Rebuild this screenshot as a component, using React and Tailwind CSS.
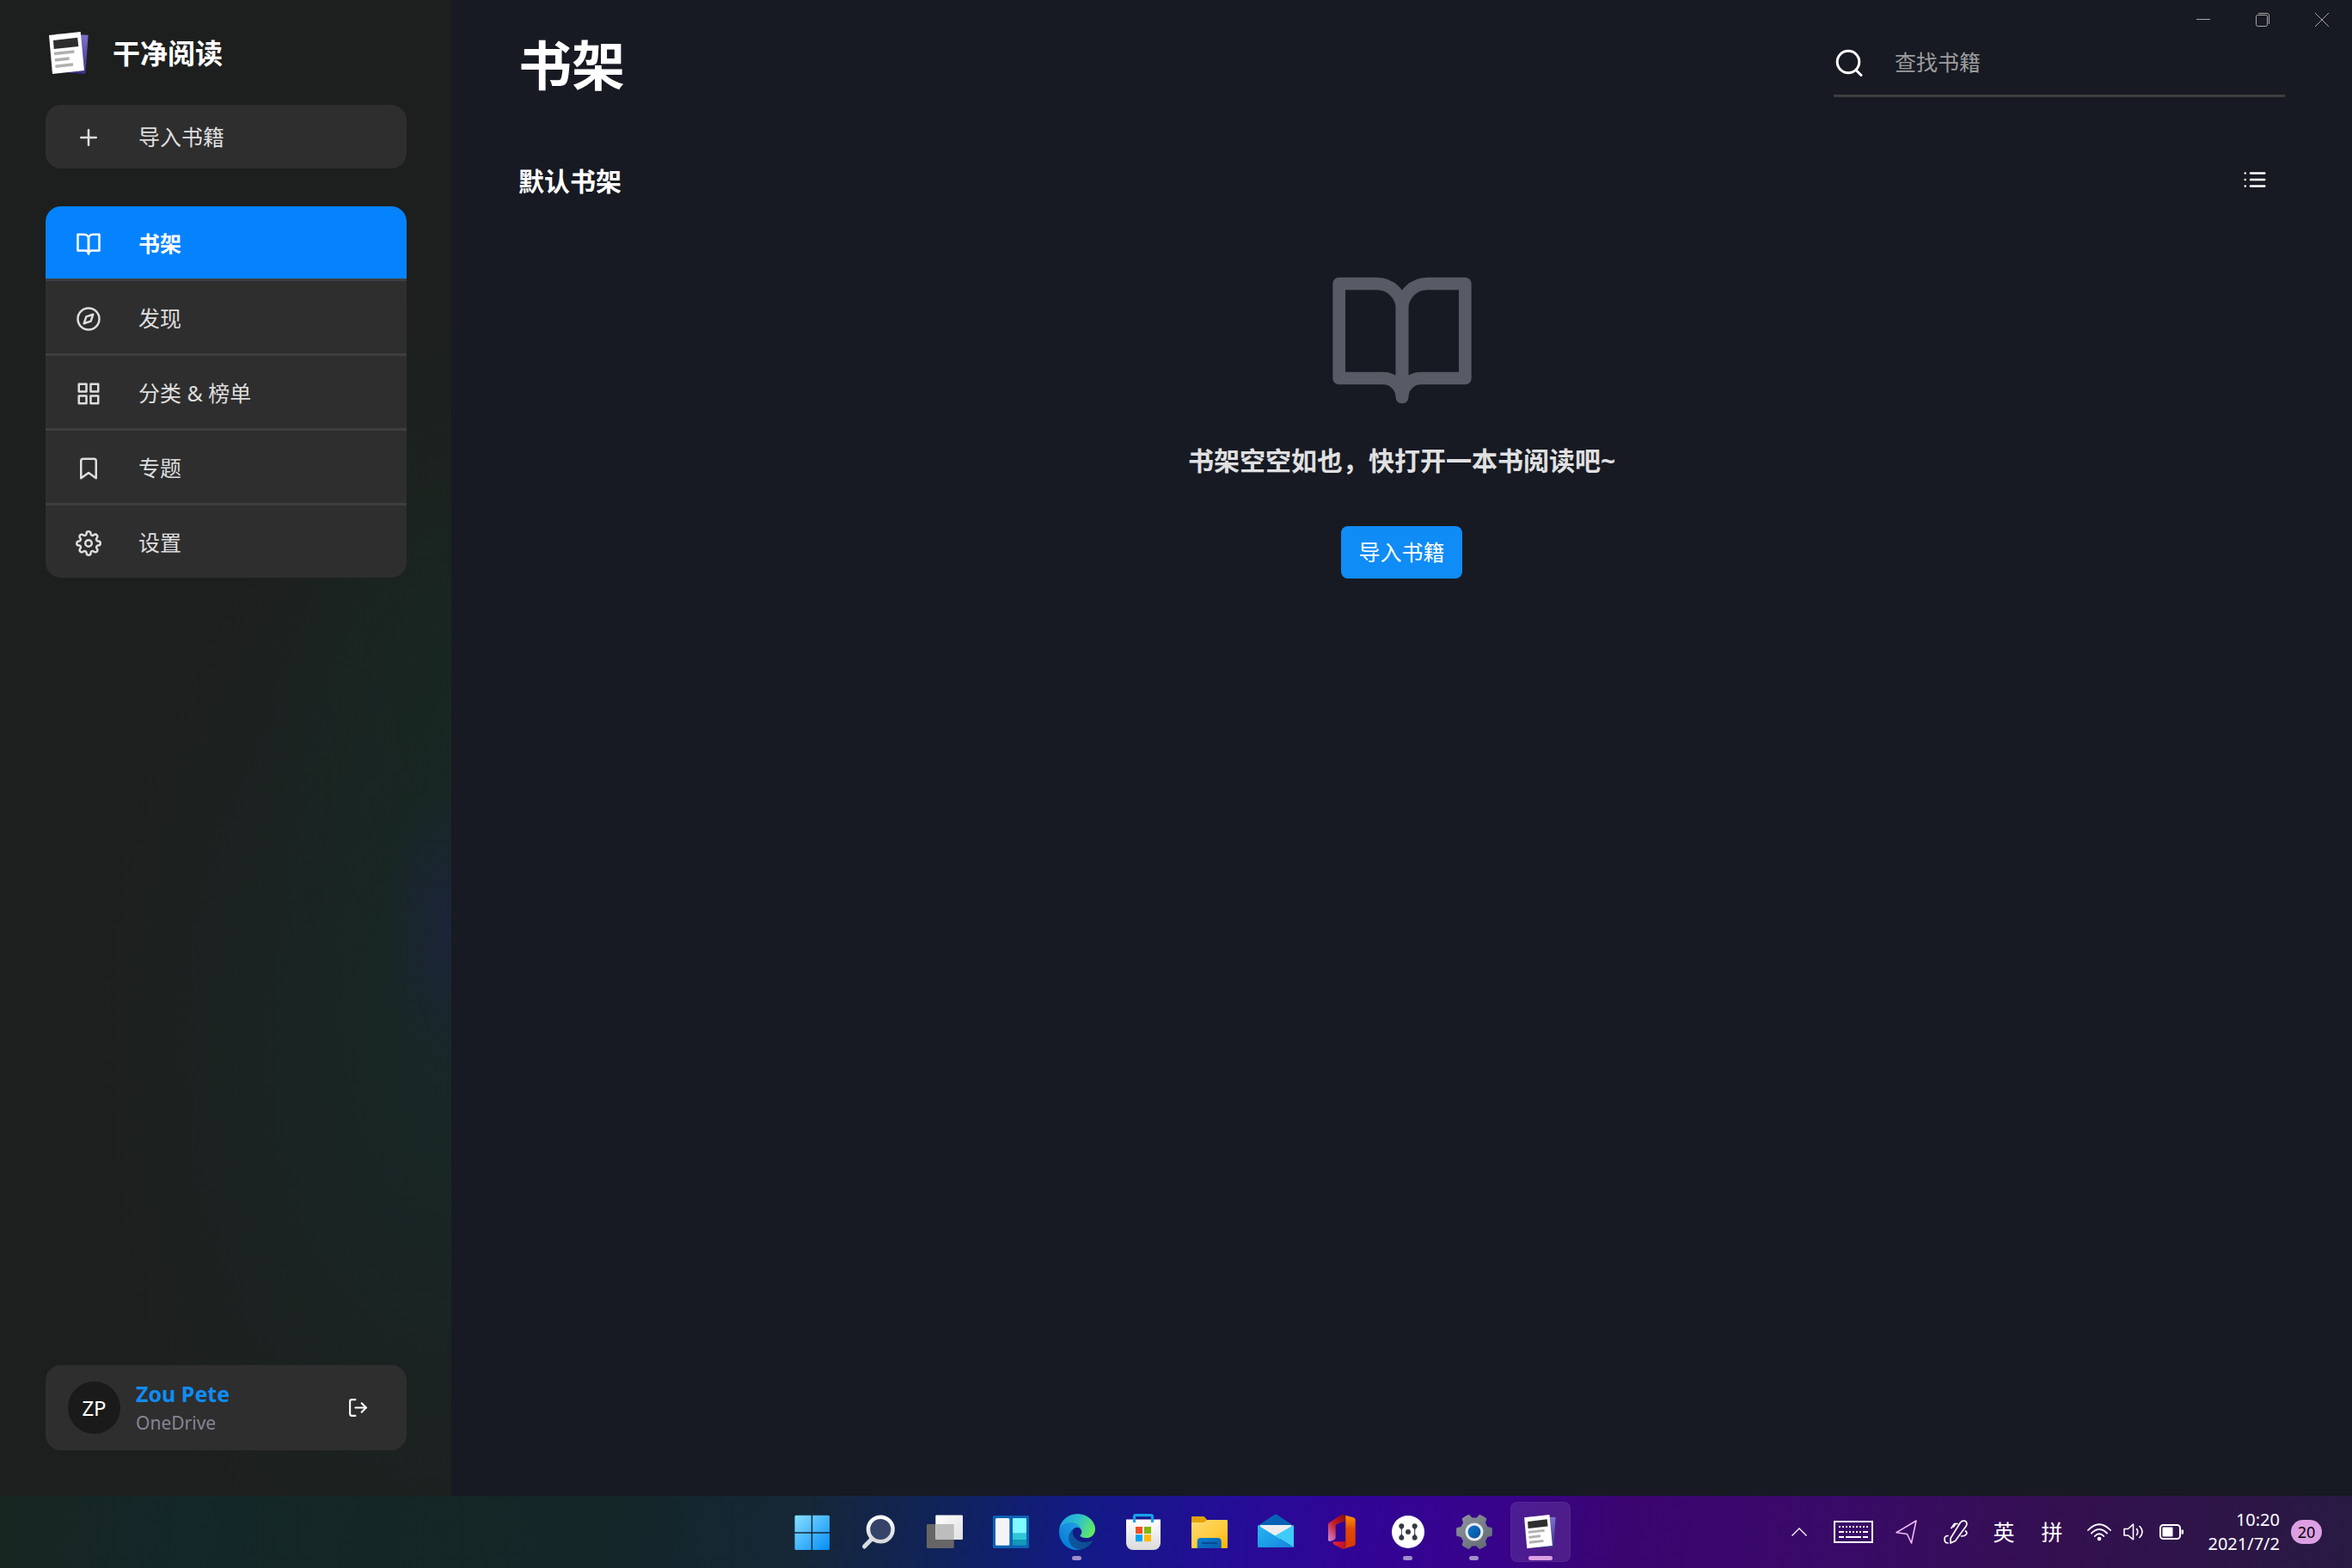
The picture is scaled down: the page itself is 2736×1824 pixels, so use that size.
import React from "react";
import {
  FiBookOpen,
  FiBookmark,
  FiCompass,
  FiGrid,
  FiList,
  FiLogOut,
  FiPlus,
  FiSettings,
} from "react-icons/fi";

const navItems = [
  { label: "书架", Icon: FiBookOpen, active: true },
  { label: "发现", Icon: FiCompass },
  { label: "分类 & 榜单", Icon: FiGrid },
  { label: "专题", Icon: FiBookmark },
  { label: "设置", Icon: FiSettings },
];

function ReaderLogo({ id, className }) {
  return (
    <svg viewBox="0 0 46 50" className={className} aria-hidden="true">
      <defs>
        <linearGradient id={id} x1="0" y1="0" x2="0" y2="1">
          <stop offset="0" stopColor="#7b74cf" />
          <stop offset="1" stopColor="#3c2f85" />
        </linearGradient>
      </defs>
      <path d="M8.500 2.500 45.600 3.700 42.500 49 22 47.500Z" fill={`url(#${id})`} />
      <path d="M0 4 36.700 0 41 45 4 49Z" fill="#fff" />
      <path d="M5 10 33.200 6.700 34.300 17 5.700 20Z" fill="#2e2e2e" />
      <path d="M6 25.500 29.400 23M6.800 33 23.600 31M7.400 40.300 28 38" stroke="#b0b0b0" strokeWidth="3.600" />
    </svg>
  );
}

function Sidebar() {
  return (
    <aside className="flex w-[525px] shrink-0 flex-col bg-[#1d1f1e] bg-[radial-gradient(ellipse_80px_170px_at_100%_62%,#1b2439_0%,transparent_100%),radial-gradient(ellipse_420px_680px_at_100%_70%,#172826_0%,transparent_100%),radial-gradient(ellipse_220px_500px_at_100%_48%,#18261f_0%,transparent_100%)] pr-[52px] pb-[53px] pl-[53px]">
      <div className="flex h-[122px] items-center gap-7 pt-[2px] pl-1">
        <ReaderLogo id="logo-side" className="h-[50px] w-[46px]" />
        <span className="text-[32px] font-bold text-white">干净阅读</span>
      </div>
      <button className="flex h-[74px] shrink-0 items-center gap-[43px] rounded-[18px] bg-[#2e2e2e] px-[35px] pt-[2px] text-[25px] text-[#dedede]">
        <FiPlus size={30} />
        导入书籍
      </button>
      <nav className="mt-11 flex flex-col divide-y-3 divide-[#3e3e3e] overflow-hidden rounded-[18px]">
        {navItems.map(({ label, Icon, active }) => (
          <a
            key={label}
            href="#"
            className={
              active
                ? "box-content flex h-[81px] items-center gap-[43px] bg-[#0583ff] px-[35px] pt-[3px] text-[25px] font-bold text-white"
                : "box-content flex h-[81px] items-center gap-[43px] bg-[#2e2e2e] px-[35px] pt-[3px] text-[25px] text-[#dedede]"
            }
          >
            <Icon size={30} />
            {label}
          </a>
        ))}
      </nav>
      <div className="mt-auto flex h-[99px] items-center rounded-[18px] bg-[#2e2e2e] pr-[44px] pl-[26px]">
        <div className="flex size-[61px] items-center justify-center rounded-full bg-[#1a1a1a] text-[24px] text-white">
          ZP
        </div>
        <div className="ml-[18px] flex-1 leading-[34px]">
          <p className="text-[25px] font-bold text-[#0f8cf5]">Zou Pete</p>
          <p className="text-[21px] text-[#858593]">OneDrive</p>
        </div>
        <button aria-label="退出登录" className="text-white">
          <FiLogOut size={25} />
        </button>
      </div>
    </aside>
  );
}

function WindowControls() {
  return (
    <div className="flex h-[46px] justify-end pr-px text-[#a8a8a8]">
      <button aria-label="最小化" className="flex w-[69px] items-center justify-center">
        <svg width="16" height="16" viewBox="0 0 16 16" stroke="currentColor" fill="none">
          <path d="M0 7.500H16" />
        </svg>
      </button>
      <button aria-label="还原" className="flex w-[69px] items-center justify-center">
        <svg width="16" height="16" viewBox="0 0 16 16" stroke="currentColor" fill="none">
          <rect x=".5" y="2.500" width="13" height="13" rx="2" />
          <path d="M3 .5H13a2.500 2.500 0 0 1 2.500 2.500V13" />
        </svg>
      </button>
      <button aria-label="关闭" className="flex w-[69px] items-center justify-center">
        <svg width="16" height="16" viewBox="0 0 16 16" stroke="currentColor" fill="none">
          <path d="M0 0 16 16M16 0 0 16" />
        </svg>
      </button>
    </div>
  );
}

function Main() {
  return (
    <main className="flex min-w-0 flex-1 flex-col bg-[#171a22]">
      <WindowControls />
      <header className="flex h-[67px] items-start justify-between px-[78px]">
        <h1 className="text-[62px] leading-[60px] font-bold text-white">书架</h1>
        <label className="flex h-[67px] w-[525px] items-center gap-[37px] border-b-3 border-[#3f3e3e] pb-[10px] pl-[2px]">
          <svg width="32" height="32" viewBox="0 0 32 32" fill="none" stroke="#fff" strokeWidth="3" strokeLinecap="round" aria-hidden="true">
            <circle cx="15" cy="15" r="12.800" />
            <path d="M24.500 25 30 30.500" />
          </svg>
          <input
            type="search"
            aria-label="查找书籍"
            placeholder="查找书籍"
            className="min-w-0 flex-1 bg-transparent text-[25px] text-white outline-none placeholder:text-[#9c9c9c]"
          />
        </label>
      </header>
      <section className="flex flex-1 flex-col px-[78px] pt-16">
        <div className="flex h-16 items-center justify-between">
          <h2 className="pt-[3px] text-[30px] font-bold text-white">默认书架</h2>
          <button aria-label="列表视图" className="p-5 text-white">
            <FiList size={30} />
          </button>
        </div>
        <div className="flex flex-col items-center pt-[67px]">
          <FiBookOpen size={176} className="text-[#585a66]" />
          <p className="mt-8 text-[30px] leading-10 font-bold text-[#e0e0e2]">书架空空如也，快打开一本书阅读吧~</p>
          <button className="mt-14 h-[61px] rounded-lg bg-[#0f8cf5] px-5 text-[25px] text-white">导入书籍</button>
        </div>
      </section>
    </main>
  );
}

function StartIcon() {
  return (
    <svg viewBox="0 0 42 42" className="size-[42px]">
      <defs>
        <linearGradient id="start" gradientUnits="userSpaceOnUse" x1="0" y1="0" x2="42" y2="42">
          <stop offset="0" stopColor="#8ae0ff" />
          <stop offset="1" stopColor="#008cf8" />
        </linearGradient>
      </defs>
      <path
        fill="url(#start)"
        d="M2 .7H19.700V20.200H.5V2.200A1.500 1.500 0 0 1 2 .7ZM21.200 .7H39.500A1.500 1.500 0 0 1 41 2.200V20.200H21.200ZM.5 21.700H19.700V41H2A1.500 1.500 0 0 1 .5 39.500ZM21.200 21.700H41V39.500A1.500 1.500 0 0 1 39.500 41H21.200Z"
      />
    </svg>
  );
}

function SearchTaskIcon() {
  return (
    <svg viewBox="0 0 42 42" className="size-[42px]" fill="none">
      <defs>
        <linearGradient id="glass" x1="0" y1="0" x2="0" y2="1">
          <stop offset="0" stopColor="#fff" />
          <stop offset="1" stopColor="#d5d9dc" />
        </linearGradient>
      </defs>
      <path d="M13.300 28 4.500 37" stroke="#d9dcdf" strokeWidth="5" strokeLinecap="round" />
      <circle cx="23.300" cy="17" r="14.300" fill="#36446a" stroke="url(#glass)" strokeWidth="4.500" />
    </svg>
  );
}

function TaskViewIcon() {
  return (
    <svg viewBox="0 0 42 42" className="size-[42px]">
      <defs>
        <linearGradient id="tv" x1="0" y1="0" x2="1" y2="1">
          <stop offset="0" stopColor="#fff" />
          <stop offset="1" stopColor="#e0e0e0" />
        </linearGradient>
      </defs>
      <rect x="0" y="11" width="31.700" height="28" rx="1.200" fill="#666" />
      <rect x="10.300" y=".5" width="31.700" height="28.500" rx="1.200" fill="url(#tv)" />
      <path d="M10.300 11H31.700V29H11.500a1.200 1.200 0 0 1-1.200-1.200Z" fill="#bdbdbd" />
    </svg>
  );
}

function WidgetsIcon() {
  return (
    <svg viewBox="0 0 42 42" className="size-[42px]">
      <rect y="1" width="42" height="38" rx="1.500" fill="#0b63b4" />
      <rect x="3" y="4" width="16.300" height="31.700" rx="1.500" fill="#f5f5f7" />
      <rect x="23" y="4" width="16" height="31.700" rx="1" fill="#1298b8" />
      <path d="M23 5a1 1 0 0 1 1-1H38a1 1 0 0 1 1 1V29H23Z" fill="#2fc7d6" />
      <path d="M23 5a1 1 0 0 1 1-1H38a1 1 0 0 1 1 1V21.300H23Z" fill="#7ffaff" />
    </svg>
  );
}

function EdgeIcon() {
  return (
    <svg viewBox="0 6 256 256" className="size-[42px] overflow-visible">
      <defs>
        <linearGradient id="edgeA" x1="0" y1="0" x2="1" y2="0">
          <stop offset="0" stopColor="#0c59a4" />
          <stop offset="1" stopColor="#114a8b" />
        </linearGradient>
        <linearGradient id="edgeB" x1=".8" y1=".2" x2=".2" y2="1">
          <stop offset="0" stopColor="#1b9de2" />
          <stop offset=".5" stopColor="#1389dc" />
          <stop offset="1" stopColor="#0078d4" />
        </linearGradient>
        <linearGradient id="edgeC" x1="0" y1=".3" x2="1" y2=".6">
          <stop offset="0" stopColor="#1ba6e6" />
          <stop offset=".5" stopColor="#2fc2c9" />
          <stop offset="1" stopColor="#66eb5e" />
        </linearGradient>
      </defs>
      <path fill="url(#edgeA)" d="M231,190.500c-3.400,1.800-6.900,3.400-10.500,4.700c-11.500,4.300-23.600,6.500-35.900,6.500c-47.300,0-88.500-32.500-88.500-74.300c0.100-11.400,6.400-21.900,16.400-27.300c-42.800,1.800-53.800,46.400-53.800,72.500c0,73.900,68.100,81.400,82.800,81.400c7.900,0,19.800-2.300,27-4.600l1.300-0.400c27.600-9.500,51-28.100,66.600-52.800c1.200-1.900,0.600-4.300-1.200-5.500C233.900,189.900,232.300,189.800,231,190.500z" />
      <path fill="url(#edgeB)" d="M105.700,241.400c-8.900-5.500-16.600-12.800-22.700-21.300c-26.300-36-18.400-86.500,17.600-112.800c3.800-2.700,7.700-5.200,11.900-7.200c3.100-1.500,8.400-4.100,15.500-4c10.100,0.100,19.600,4.900,25.700,13c4,5.400,6.300,11.900,6.400,18.700c0-0.200,24.500-79.600-80-79.600c-43.900,0-80,41.700-80,78.200c-0.200,19.300,4,38.500,12.100,56c27.600,58.800,94.800,87.600,156.400,67.100C147.500,256.100,124.500,253.200,105.700,241.400L105.700,241.400z" />
      <path fill="url(#edgeC)" d="M152.300,148.900c-0.800,1-3.300,2.500-3.300,5.700c0,2.600,1.700,5.100,4.700,7.200c14.400,10,41.500,8.700,41.600,8.700c10.700,0,21.100-2.900,30.300-8.300c18.800-11,30.400-31.100,30.400-52.900c0.300-22.400-8-37.300-11.300-43.900C223.500,23.900,177.700,0,128,0C58,0,1,56.200,0,126.200c0.500-36.500,36.800-66,80-66c3.500,0,23.500,0.300,42,10.100c16.300,8.600,24.900,18.900,30.800,29.200c6.200,10.700,7.300,24.100,7.300,29.500S157.300,142.300,152.300,148.900z" />
    </svg>
  );
}

function StoreIcon() {
  return (
    <svg viewBox="0 0 42 42" className="size-[42px] overflow-visible">
      <defs>
        <linearGradient id="bag" x1="0" y1="0" x2="0" y2="1">
          <stop offset="0" stopColor="#fff" />
          <stop offset="1" stopColor="#dadada" />
        </linearGradient>
      </defs>
      <path d="M1 5.500H41V33a8 8 0 0 1-8 8H9a8 8 0 0 1-8-8Z" fill="url(#bag)" />
      <path d="M10.500 9V2A1.500 1.500 0 0 1 12 .6H30A1.500 1.500 0 0 1 31.500 2V9" fill="none" stroke="#16a3e8" strokeWidth="3.200" />
      <path d="M12 14h8v8h-8Z" fill="#f25022" />
      <path d="M22 14h8v8h-8Z" fill="#7fba00" />
      <path d="M12 23.200h8v8h-8Z" fill="#00a4ef" />
      <path d="M22 23.200h8v8h-8Z" fill="#ffb900" />
    </svg>
  );
}

function ExplorerIcon() {
  return (
    <svg viewBox="0 0 42 42" className="size-[42px]">
      <defs>
        <linearGradient id="folder" x1="0" y1="0" x2="1" y2="1">
          <stop offset="0" stopColor="#ffda72" />
          <stop offset=".6" stopColor="#ffcb3a" />
          <stop offset="1" stopColor="#f9b300" />
        </linearGradient>
        <linearGradient id="folderBlue" x1="0" y1="0" x2="1" y2="1">
          <stop offset="0" stopColor="#0a7ed0" />
          <stop offset="1" stopColor="#0a5cab" />
        </linearGradient>
      </defs>
      <path d="M1 2H13.500a3 3 0 0 1 2.200 1L18 6V12H0V3A1 1 0 0 1 1 2Z" fill="#e2a203" />
      <path d="M0 9H13.500a3 3 0 0 0 2-.8L17.500 6.500A2 2 0 0 1 19 6H41a1 1 0 0 1 1 1V38a1 1 0 0 1-1 1H1a1 1 0 0 1-1-1Z" fill="url(#folder)" />
      <path d="M6.700 39V31a4 4 0 0 1 4-4H30.700a4 4 0 0 1 4 4V39Z" fill="url(#folderBlue)" />
      <path d="M13 33H29" stroke="#074a8f" strokeWidth="2" strokeLinecap="round" />
    </svg>
  );
}

function MailIcon() {
  return (
    <svg viewBox="0 0 42 42" className="size-[42px] overflow-visible">
      <defs>
        <linearGradient id="mailBody" x1="0" y1="0" x2="1" y2="1">
          <stop offset="0" stopColor="#25b8f2" />
          <stop offset="1" stopColor="#1583de" />
        </linearGradient>
      </defs>
      <path d="M0 13 19 .2a3.500 3.500 0 0 1 4 0L42 13V20H0Z" fill="#0762b5" />
      <path d="M2.500 12H39.500V28H2.500Z" fill="#ededf0" />
      <path d="M42 12V38L20 24.500Z" fill="#3dcbf7" />
      <path d="M0 12 42 38H1a1 1 0 0 1-1-1Z" fill="url(#mailBody)" />
    </svg>
  );
}

function OfficeIcon() {
  return (
    <svg viewBox="0 0 42 42" className="size-[42px] overflow-visible">
      <defs>
        <linearGradient id="offA" x1=".8" y1="0" x2="0" y2="1">
          <stop offset="0" stopColor="#8c0f12" />
          <stop offset=".45" stopColor="#c7202c" />
          <stop offset="1" stopColor="#d18ae0" />
        </linearGradient>
        <linearGradient id="offB" x1="0" y1="0" x2="0" y2="1">
          <stop offset="0" stopColor="#ff9500" />
          <stop offset=".4" stopColor="#e34a02" />
          <stop offset="1" stopColor="#d83a00" />
        </linearGradient>
        <linearGradient id="offC" x1="0" y1="0" x2="1" y2="0">
          <stop offset="0" stopColor="#f0203a" />
          <stop offset="1" stopColor="#b01226" />
        </linearGradient>
      </defs>
      <path d="M5 11.500a3 3 0 0 1 1.600-2.600L19.500 .6Q21.500-.5 25.300 .7V7L15 11a2 2 0 0 0-1.300 2V26.500a3 3 0 0 1-1.500 2.500L7.500 31Q5 31.500 5 29Z" fill="url(#offA)" />
      <path d="M11.500 31.300H26L24 39.500Q22 40.200 20 39L11.500 34.500Q9.500 32 11.500 31.300Z" fill="url(#offC)" />
      <path d="M25.300 .7 35 3.600a2.500 2.500 0 0 1 1.700 2.400V34a2.500 2.500 0 0 1-1.700 2.200L22.500 39.700Q25.300 38.500 25.300 35Z" fill="url(#offB)" />
    </svg>
  );
}

function NodesIcon() {
  return (
    <svg viewBox="0 0 42 42" className="size-[42px]">
      <circle cx="21" cy="20" r="19" fill="#fff" />
      <g fill="#343a42">
        <circle cx="13.300" cy="13.300" r="3" />
        <circle cx="13.300" cy="26.700" r="3" />
        <circle cx="28.700" cy="13.300" r="3" />
        <circle cx="28.700" cy="26.700" r="3" />
        <circle cx="21" cy="20" r="3" />
        <path d="M11.500 14 13 18V22L11.500 26H15.100L13.800 22V18L15.100 14ZM26.900 14 28.200 18V22L26.900 26H30.500L29.200 22V18L30.500 14Z" />
      </g>
    </svg>
  );
}

function GearIcon() {
  return (
    <svg viewBox="-21 -20 42 42" className="size-[42px] overflow-visible">
      <defs>
        <linearGradient id="gearFill" gradientUnits="userSpaceOnUse" x1="-15" y1="-18" x2="15" y2="18">
          <stop offset="0" stopColor="#8b929b" />
          <stop offset="1" stopColor="#626b74" />
        </linearGradient>
        <linearGradient id="gearBlue" x1="0" y1="0" x2="1" y2="1">
          <stop offset="0" stopColor="#0b78cf" />
          <stop offset="1" stopColor="#0b4f9c" />
        </linearGradient>
      </defs>
      <path
        fill="url(#gearFill)"
        d="M20.600-4.700Q21.200 0 20.600 4.700L15.500 6 13 10.500 14.400 15.500Q10.600 18.700 6.200 20.200L2.500 16.600H-2.500L-6.200 20.200Q-10.600 18.700-14.400 15.500L-13 10.500-15.500 6-20.600 4.700Q-21.200 0-20.600-4.700L-15.500-6-13-10.500-14.400-15.500Q-10.600-18.700-6.200-20.200L-2.500-16.600H2.500L6.200-20.200Q10.600-18.700 14.400-15.500L13-10.500 15.500-6Z"
      />
      <circle r="10.500" fill="#e9eaec" />
      <circle r="7.400" fill="url(#gearBlue)" />
    </svg>
  );
}

const apps = [
  { name: "开始", Icon: StartIcon },
  { name: "搜索", Icon: SearchTaskIcon },
  { name: "任务视图", Icon: TaskViewIcon },
  { name: "小组件", Icon: WidgetsIcon },
  { name: "Edge", Icon: EdgeIcon, running: true },
  { name: "商店", Icon: StoreIcon },
  { name: "文件资源管理器", Icon: ExplorerIcon },
  { name: "邮件", Icon: MailIcon },
  { name: "Office", Icon: OfficeIcon },
  { name: "节点", Icon: NodesIcon, running: true },
  { name: "系统设置", Icon: GearIcon, running: true },
];

function Tray() {
  return (
    <div className="flex items-center justify-end pr-[35px] text-white">
      <button aria-label="显示隐藏的图标">
        <svg width="18" height="10" viewBox="0 0 18 10" fill="none" stroke="currentColor" strokeWidth="1.300">
          <path d="M.5 9.500 9 1 17.500 9.500" />
        </svg>
      </button>
      <button aria-label="触摸键盘" className="ml-[31px]">
        <svg width="46" height="26" viewBox="0 0 46 26" fill="none" stroke="currentColor" strokeWidth="2">
          <rect x="1" y="1" width="44" height="24" />
          <path d="M6 7H40" strokeDasharray="2 2" />
          <path d="M6 13H12M34 13H40M6 19H12M14 19H32M34 19H40" />
          <path d="M14 13H32" strokeDasharray="2 2" />
        </svg>
      </button>
      <button aria-label="位置" className="ml-[26px] text-[#f0b9f2]">
        <svg width="25" height="28" viewBox="0 0 25 28" fill="none" stroke="currentColor" strokeWidth="1.600" strokeLinejoin="round">
          <path d="M24 1 18.500 27 13.500 16.500 1 14.800Z" />
        </svg>
      </button>
      <button aria-label="手写笔" className="ml-[31px]">
        <svg width="28" height="28" viewBox="0 0 28 28" fill="none" stroke="currentColor" strokeWidth="1.700" strokeLinecap="round" strokeLinejoin="round">
          <path d="M8 27V21.500L19.500 3Q21.500 .3 25 1.300 28 3.500 26.300 7L13.500 24.500Z" />
          <path d="M9 9.500 12.500 4.500H16M14 4.500 11.500 8M25.500 13Q29 16 24 18.500L20.500 19M5 18.500Q1 18.500 1 22.500 1 27 5 27" />
        </svg>
      </button>
      <button className="ml-[29px] text-[25px] leading-8">英</button>
      <button className="ml-[31px] text-[25px] leading-8">拼</button>
      <button aria-label="网络、音量和电池" className="ml-[29px] flex items-center">
        <svg width="28" height="21" viewBox="0 0 28 21" fill="none" stroke="currentColor" strokeWidth="1.800" strokeLinecap="round">
          <path d="M1 8Q14-5.500 27 8M5 11.500Q14 2.500 23 11.500M8.800 15Q14 9.500 19.200 15" />
          <circle cx="14" cy="18" r="2.300" fill="currentColor" stroke="none" />
        </svg>
        <svg width="24" height="20" viewBox="0 0 24 20" fill="none" stroke="currentColor" strokeWidth="1.600" strokeLinecap="round" strokeLinejoin="round" className="ml-[14px]">
          <path d="M1 6.500H5.500L11.500 1.200V18.800L5.500 14H1ZM15.500 6.500Q18 10 15.500 13.500M19 3.500Q25 10 19 16.500" />
        </svg>
        <svg width="28" height="18" viewBox="0 0 28 18" fill="none" stroke="currentColor" strokeWidth="2" className="ml-[18px]">
          <rect x="1" y="1" width="23" height="16" rx="3.500" />
          <rect x="3.500" y="3.500" width="12" height="11" rx="1" fill="currentColor" stroke="none" />
          <path d="M25.500 6.500H26.500A1.500 1.500 0 0 1 26.500 11.500H25.500Z" fill="currentColor" stroke="none" />
        </svg>
      </button>
      <button className="ml-7 flex items-center gap-[13px]">
        <span className="text-right text-[20px] leading-7">
          <span className="block">10:20</span>
          <span className="block">2021/7/2</span>
        </span>
        <span className="flex h-7 w-9 items-center justify-center rounded-full bg-[#dd9fe3] text-[18px] text-black">
          20
        </span>
      </button>
    </div>
  );
}

function Taskbar() {
  return (
    <footer className="grid h-[84px] shrink-0 grid-cols-[1fr_auto_1fr] items-center bg-[linear-gradient(97deg,#172621_0%,#142729_8%,#152725_16%,#142628_26%,#152736_34%,#10235a_40%,#121a85_46%,#240d96_52%,#320496_58%,#380389_64%,#3b0570_69%,#390a68_78%,#33104f_88%,#281a42_100%)]">
      <div className="col-start-2 flex gap-[7px]">
        {apps.map(({ name, Icon, running }) => (
          <button key={name} aria-label={name} className="relative flex size-[70px] items-center justify-center pt-[2px]">
            <Icon />
            {running && <span className="absolute bottom-[2px] h-[5px] w-[11px] rounded-full bg-[#a08fc8]" />}
          </button>
        ))}
        <button aria-label="干净阅读" className="relative flex size-[70px] items-center justify-center rounded-lg border border-white/5 bg-white/10">
          <ReaderLogo id="logo-task" className="h-10 w-[37px]" />
          <span className="absolute bottom-[1px] h-[5px] w-7 rounded-full bg-[#dd9fe3]" />
        </button>
      </div>
      <Tray />
    </footer>
  );
}

export default function App() {
  return (
    <div
      lang="zh-CN"
      className="flex min-h-screen flex-col bg-[#171a22] font-['Noto_Sans','Noto_Sans_CJK_SC',sans-serif]"
    >
      <div className="flex flex-1">
        <Sidebar />
        <Main />
      </div>
      <Taskbar />
    </div>
  );
}
